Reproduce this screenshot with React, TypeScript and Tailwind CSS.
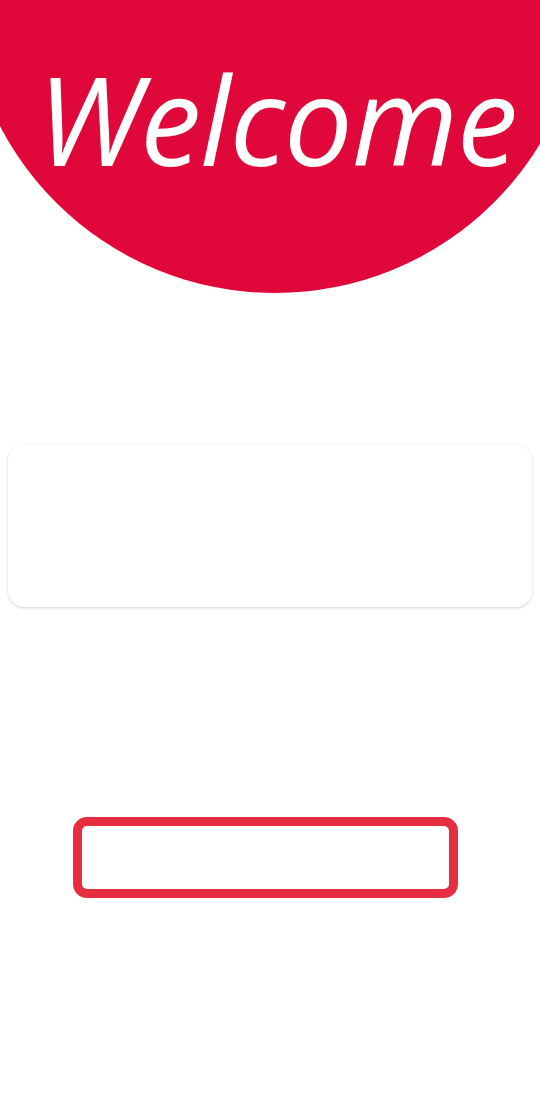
export default function App() {
  return (
    <div className="min-h-[1098px] w-full overflow-hidden bg-white flex flex-col">
      {/* red header disc */}
      <div className="shrink-0 w-[620px] h-[620px] -mt-[327px] -ml-[35px] rounded-full bg-[#e0073a] flex items-end justify-center pb-[113px]">
        <h1
          className="text-white italic font-normal text-[122px] leading-none tracking-[-1px] pl-[4px]"
          style={{ fontFamily: '"Open Sans", "Noto Sans", sans-serif' }}
        >
          Welcome
        </h1>
      </div>

      {/* empty card */}
      <div className="mt-[152px] mx-2 h-[162px] rounded-2xl bg-white shadow-[0_1px_3px_rgba(0,0,0,0.18)]" />

      {/* outlined button */}
      <div className="mt-[210px] ml-[73px] w-[385px] h-[81px] rounded-[14px] border-[9px] border-[#e52e40]" />
    </div>
  )
}
